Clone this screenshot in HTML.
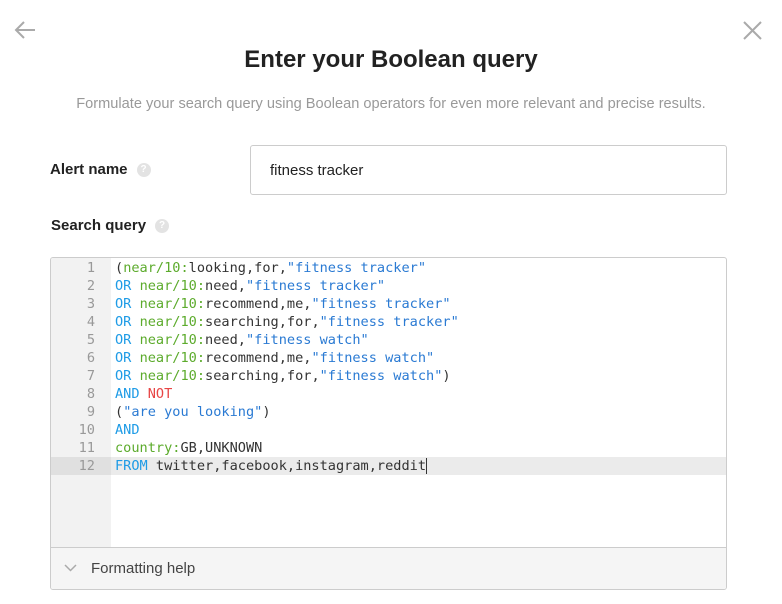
<!DOCTYPE html>
<html><head><meta charset="utf-8"><style>
*{margin:0;padding:0;box-sizing:border-box}
body{width:782px;height:604px;background:#fff;font-family:"Liberation Sans",Arial,sans-serif;position:relative;overflow:hidden;color:#222}
.abs{position:absolute}
h1{position:absolute;top:46px;left:0;width:782px;text-align:center;font-size:24px;font-weight:bold;color:#222}
.sub{top:96px;left:0;width:782px;text-align:center;font-size:14.6px;color:#999}
.lbl{font-size:15px;font-weight:bold;color:#222}
.q{display:inline-block;width:14px;height:14px;border-radius:50%;background:#e3e3e3;color:#fff;font-size:10px;text-align:center;line-height:14px;vertical-align:middle;margin-left:9px}
.inp{left:250px;top:145px;width:477px;height:50px;border:1px solid #ccc;border-radius:3px;padding-left:19px;line-height:50px;font-size:15px;color:#222}
.ed{left:50px;top:257px;width:677px;height:333px;border:1px solid #ccc;border-radius:3px;overflow:hidden}
.gut{position:absolute;left:0;top:0;width:60px;height:289px;background:#f2f2f2}
.code{position:absolute;left:0;top:1px;width:100%;font-family:"DejaVu Sans Mono",monospace;font-size:13.6px}
.ln{height:18px;line-height:18px;white-space:pre;position:relative}
.ln .n{display:inline-block;width:44px;text-align:right;color:#999;margin-right:20px}
.hl{background:#ebebeb}
.hl .n{background:#e0e0e0;margin-right:4px;padding-right:16px;width:60px}
.k{color:#1e9be6}.g{color:#5cab2c}.s{color:#2a7ad3}.r{color:#e84545}.t{color:#333}
.foot{position:absolute;left:0;top:289px;width:100%;height:43px;background:#f5f5f5;border-top:1px solid #ccc;font-size:15px;color:#444;line-height:42px;padding-left:40px}
</style></head><body>
<svg class="abs" style="left:13px;top:20px" width="24" height="20" viewBox="0 0 24 20"><path d="M22 10H3M11 2L3 10l8 8" fill="none" stroke="#aaa" stroke-width="2"/></svg>
<svg class="abs" style="left:743px;top:21px" width="19" height="19" viewBox="0 0 19 19"><path d="M1 1L18 18M18 1L1 18" stroke="#aaa" stroke-width="2"/></svg>
<h1>Enter your Boolean query</h1>
<div class="abs sub">Formulate your search query using Boolean operators for even more relevant and precise results.</div>
<div class="abs lbl" style="left:50px;top:161px">Alert name<span class="q">?</span></div>
<div class="abs inp">fitness tracker</div>
<div class="abs lbl" style="left:51px;top:217px">Search query<span class="q">?</span></div>
<div class="abs ed">
<div class="gut"></div>
<div class="code">
<div class="ln"><span class="n">1</span><span class="t">(</span><span class="g">near/10:</span><span class="t">looking,for,</span><span class="s">"fitness tracker"</span></div>
<div class="ln"><span class="n">2</span><span class="k">OR </span><span class="g">near/10:</span><span class="t">need,</span><span class="s">"fitness tracker"</span></div>
<div class="ln"><span class="n">3</span><span class="k">OR </span><span class="g">near/10:</span><span class="t">recommend,me,</span><span class="s">"fitness tracker"</span></div>
<div class="ln"><span class="n">4</span><span class="k">OR </span><span class="g">near/10:</span><span class="t">searching,for,</span><span class="s">"fitness tracker"</span></div>
<div class="ln"><span class="n">5</span><span class="k">OR </span><span class="g">near/10:</span><span class="t">need,</span><span class="s">"fitness watch"</span></div>
<div class="ln"><span class="n">6</span><span class="k">OR </span><span class="g">near/10:</span><span class="t">recommend,me,</span><span class="s">"fitness watch"</span></div>
<div class="ln"><span class="n">7</span><span class="k">OR </span><span class="g">near/10:</span><span class="t">searching,for,</span><span class="s">"fitness watch"</span><span class="t">)</span></div>
<div class="ln"><span class="n">8</span><span class="k">AND </span><span class="r">NOT</span></div>
<div class="ln"><span class="n">9</span><span class="t">(</span><span class="s">"are you looking"</span><span class="t">)</span></div>
<div class="ln"><span class="n">10</span><span class="k">AND</span></div>
<div class="ln"><span class="n">11</span><span class="g">country:</span><span class="t">GB,UNKNOWN</span></div>
<div class="ln hl"><span class="n">12</span><span class="k">FROM</span><span class="t"> twitter,facebook,instagram,reddit</span><span style="border-left:1px solid #333"></span></div>
</div>
<div class="foot"><svg class="abs" style="left:13px;top:16px" width="13" height="8" viewBox="0 0 13 8"><path d="M1 1l5.5 5.5L12 1" fill="none" stroke="#aaa" stroke-width="1.5"/></svg>Formatting help</div>
</div>
</body></html>
